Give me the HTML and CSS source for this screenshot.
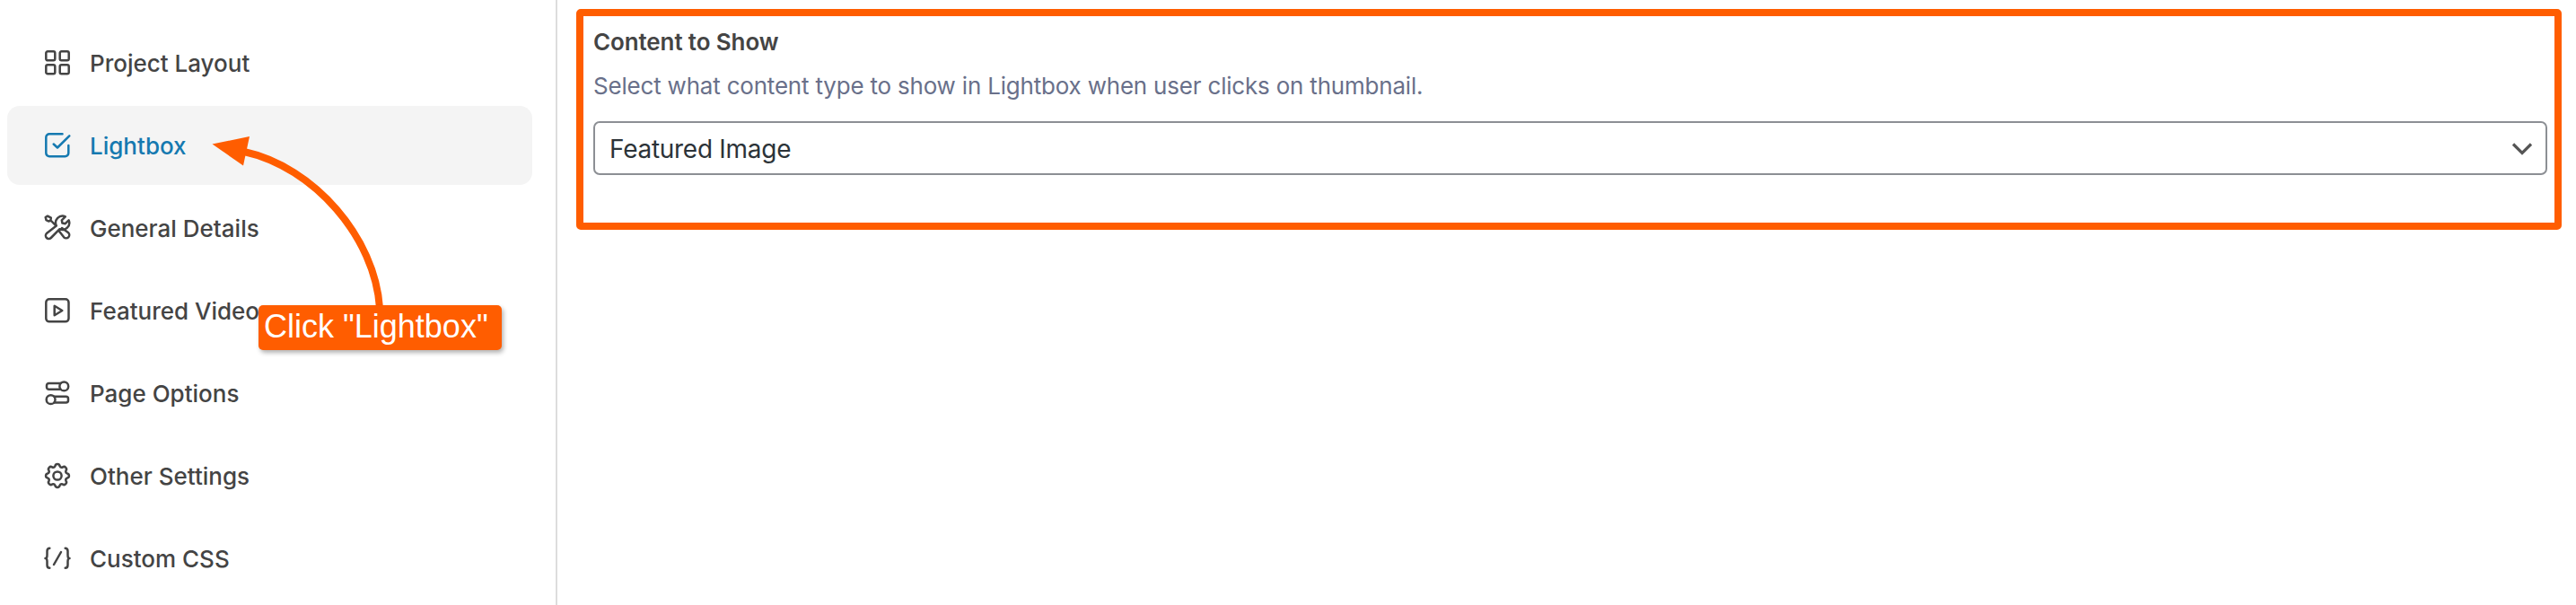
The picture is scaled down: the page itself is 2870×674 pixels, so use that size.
FILE: index.html
```html
<!DOCTYPE html>
<html lang="en">
<head>
<meta charset="utf-8">
<title>Project Settings</title>
<link rel="stylesheet" href="styles.css">
</head>
<body>
<div class="settings">
  <nav class="sidebar">
    <a class="item"><svg class="icon" viewBox="0 0 32 32"><rect x="3.3" y="3.3" width="10" height="10" rx="1.8"/><rect x="18.7" y="3.3" width="10" height="10" rx="1.8"/><rect x="3.3" y="18.2" width="10" height="10" rx="1.8"/><rect x="18.7" y="18.2" width="10" height="10" rx="1.8"/></svg><span>Project Layout</span></a>
    <a class="item active"><svg class="icon" viewBox="0 0 32 32"><path d="M21.5 3.300H7a3.700 3.700 0 0 0-3.700 3.700v17.600a3.700 3.700 0 0 0 3.700 3.700h17.600a3.700 3.700 0 0 0 3.700-3.700V16M11.700 14.500l4.300 4L29.300 5.300"/></svg><span>Lightbox</span></a>
    <a class="item"><svg class="icon" viewBox="0 0 32 32"><path d="M2.700 4L5 2.700l3.800 2-.4 3L6 8.500 3.500 7.200zM8.500 7.500L14.500 13.700M17.500 19l5.700 7.300a3.500 3.500 0 0 0 5-5L21 16M14.800 13.500a7.600 7.600 0 0 1 10-10.200L20.800 7.300l.6 3.300 3.300.6 3.900-3.900A7.600 7.600 0 0 1 18.500 17.200L8.800 27a3.400 3.400 0 0 1-4.900-4.900z"/></svg><span>General Details</span></a>
    <a class="item"><svg class="icon" viewBox="0 0 32 32"><rect x="3.300" y="3.300" width="25.200" height="25" rx="3.600"/><path d="M12.700 10.800v10.400L21.300 16z"/></svg><span>Featured Video</span></a>
    <a class="item"><svg class="icon" viewBox="0 0 32 32"><circle cx="23.300" cy="8.400" r="4.900"/><path d="M19.500 5H6.500a2.500 2.500 0 0 0-2.500 2.500v1.800a2.500 2.500 0 0 0 2.500 2.500h13"/><circle cx="8.600" cy="23.200" r="4.900"/><path d="M12.500 19.800h13a2.500 2.500 0 0 1 2.500 2.500v1.800a2.500 2.500 0 0 1-2.500 2.500h-13"/></svg><span>Page Options</span></a>
    <a class="item"><svg class="icon" viewBox="0 0 32 32"><circle cx="16" cy="16" r="4.600"/><path d="M13.400 5.200a2.650 2.650 0 0 1 5.200 0 2.500 2.500 0 0 0 3.200 1.300 2.650 2.650 0 0 1 3.700 3.700 2.500 2.500 0 0 0 1.300 3.200 2.650 2.650 0 0 1 0 5.200 2.500 2.500 0 0 0-1.300 3.200 2.650 2.650 0 0 1-3.700 3.700 2.500 2.500 0 0 0-3.200 1.300 2.650 2.650 0 0 1-5.200 0 2.500 2.500 0 0 0-3.200-1.300 2.650 2.650 0 0 1-3.700-3.700 2.500 2.500 0 0 0-1.300-3.200 2.650 2.650 0 0 1 0-5.200 2.500 2.500 0 0 0 1.300-3.200 2.650 2.650 0 0 1 3.700-3.700 2.500 2.500 0 0 0 3.200-1.300z"/></svg><span>Other Settings</span></a>
    <a class="item"><svg class="icon" viewBox="0 0 32 32"><path d="M7.300 4.700Q4.500 4.700 4.500 8v4.500Q4.500 16 2.500 16 4.500 16 4.500 19.500V23.500q0 3.300 2.800 3.300M24.700 4.700q2.800 0 2.800 3.300v4.500q0 3.500 2 3.500-2 0-2 3.500V23.500q0 3.300-2.800 3.300M20 9l-8 14"/></svg><span>Custom CSS</span></a>
  </nav>
  <main class="content">
    <section class="panel">
      <h2 class="title">Content to Show</h2>
      <p class="description">Select what content type to show in Lightbox when user clicks on thumbnail.</p>
      <div class="select"><span class="value">Featured Image</span><svg class="chevron" viewBox="0 0 24 16"><path d="M2 3.500L12 13.500 22 3.500"/></svg></div>
    </section>
  </main>
  <svg class="arrow" viewBox="0 0 200 200"><path class="shaft" d="M42 19C120 36 188 115 193 193"/><path class="head" d="M6.500 10.500L48 2 41 34.500z"/></svg>
  <div class="callout">Click "Lightbox"</div>
</div>
</body>
</html>
```
FILE: styles.css
```css
* { box-sizing: border-box; }
body { margin: 0; background: #fff; font-family: Inter, sans-serif; }
.settings { position: relative; display: flex; height: 674px; overflow: hidden; }
.sidebar { display: flex; flex-direction: column; gap: 4px; width: 621px; flex: none; padding: 26px 26px 0 8px; border-right: 2px solid #ddd; }
.item { display: flex; align-items: center; gap: 20px; height: 88px; flex: none; padding-left: 40px; border-radius: 14px; color: #444; font-size: 26px; line-height: 36px; font-weight: 500; white-space: nowrap; }
.item span { padding-top: 2px; }
.item.active { background: #f4f4f4; color: #1579b0; }
.icon { width: 32px; height: 32px; flex: none; fill: none; stroke: currentColor; stroke-width: 2.500; stroke-linecap: round; stroke-linejoin: round; }
.content { flex: 1; padding: 10px 16px 0 21px; }
.panel { height: 246px; padding: 11px 8px 0 11px; border: 8px solid #ff5d00; border-radius: 5px; }
.title { margin: 0; color: #444; font-size: 26px; line-height: 36px; font-weight: 600; letter-spacing: -.12px; }
.title, .description { white-space: nowrap; }
.description { margin: 13px 0 0; color: #69708a; font-size: 26px; line-height: 36px; letter-spacing: -.2px; }
.select { display: flex; align-items: center; justify-content: space-between; height: 60px; margin-top: 21px; padding: 0 14px 0 16px; border: 2px solid #8c8f94; border-radius: 7px; color: #2c3338; font-size: 28px; line-height: 40px; letter-spacing: -.28px; }
.value { padding-top: 2px; }
.chevron { width: 24px; height: 16px; fill: none; stroke: #555; stroke-width: 3.200; }
.arrow { position: absolute; left: 230px; top: 150px; width: 200px; height: 200px; }
.shaft { fill: none; stroke: #ff5d00; stroke-width: 8; }
.head { fill: #ff5d00; }
.callout { position: absolute; left: 288px; top: 340px; width: 271px; height: 50px; padding-left: 6px; border-radius: 5px; background: #ff5d00; color: #fff; font: 36px/48px "Liberation Sans", sans-serif; white-space: nowrap; box-shadow: 2px 3px 5px rgba(0,0,0,.3); }
```
